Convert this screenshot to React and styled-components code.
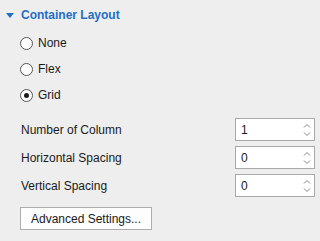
import React, { useState } from 'react';
import styled, { createGlobalStyle } from 'styled-components';

const GlobalStyle = createGlobalStyle`
  body {
    margin: 0;
    background: #eeeeee;
    font-family: "Liberation Sans", Arial, sans-serif;
    font-size: 12px;
    color: #1a1a1a;
  }
`;

const Panel = styled.div`
  width: 320px;
  height: 241px;
  background: #eeeeee;
`;

const Header = styled.div`
  height: 30px;
  display: flex;
  align-items: center;
  padding-left: 6px;
  gap: 7px;
  color: #1f6fc5;
  font-weight: bold;
  font-size: 12px;
  cursor: pointer;
`;

const RadioGroup = styled.div`
  padding-left: 20px;
  display: flex;
  flex-direction: column;
`;

const RadioRow = styled.label`
  height: 26px;
  display: flex;
  align-items: center;
  gap: 5px;
  cursor: pointer;
`;

const RadioCircle = styled.span`
  width: 11px;
  height: 11px;
  border: 1px solid #555555;
  border-radius: 50%;
  background: #ffffff;
  display: flex;
  align-items: center;
  justify-content: center;

  &::after {
    content: '';
    width: 5px;
    height: 5px;
    border-radius: 50%;
    background: #1a1a1a;
    display: ${(p) => (p.checked ? 'block' : 'none')};
  }
`;

const Fields = styled.div`
  margin-top: 10px;
  padding: 0 5px 0 21px;
  display: flex;
  flex-direction: column;
  gap: 5px;
`;

const FieldRow = styled.div`
  height: 23px;
  display: flex;
  align-items: center;
  justify-content: space-between;
`;

const SpinBox = styled.div`
  height: 21px;
  width: 73px;
  border: 1px solid #a9a9a9;
  background: #ffffff;
  display: flex;
  align-items: center;
  padding-left: 5px;
`;

const SpinValue = styled.span`
  flex: 1;
`;

const SpinArrows = styled.div`
  width: 15px;
  height: 21px;
  display: flex;
  align-items: center;
  justify-content: center;
`;

const Button = styled.button`
  margin: 10px 0 0 20px;
  width: 132px;
  height: 23px;
  border: 1px solid #adadad;
  background: #fdfdfd;
  font-family: inherit;
  font-size: 12px;
  color: #1a1a1a;
  padding: 0;
`;

function Caret() {
  return (
    <svg width="8" height="5" viewBox="0 0 8 5">
      <path d="M0 0 H8 L4 5 Z" fill="#1f6fc5" />
    </svg>
  );
}

function Arrows() {
  return (
    <svg width="8" height="14" viewBox="0 0 8 14">
      <path d="M1 4.5 L4 1.5 L7 4.5" fill="none" stroke="#858585" strokeWidth="1" />
      <path d="M1 9.5 L4 12.5 L7 9.5" fill="none" stroke="#858585" strokeWidth="1" />
    </svg>
  );
}

function Field({ label, value }) {
  return (
    <FieldRow>
      <span>{label}</span>
      <SpinBox>
        <SpinValue>{value}</SpinValue>
        <SpinArrows>
          <Arrows />
        </SpinArrows>
      </SpinBox>
    </FieldRow>
  );
}

export default function App() {
  const [layout, setLayout] = useState('Grid');

  return (
    <Panel>
      <GlobalStyle />
      <Header>
        <Caret />
        Container Layout
      </Header>
      <RadioGroup>
        {['None', 'Flex', 'Grid'].map((opt) => (
          <RadioRow key={opt} onClick={() => setLayout(opt)}>
            <RadioCircle checked={layout === opt} />
            {opt}
          </RadioRow>
        ))}
      </RadioGroup>
      <Fields>
        <Field label="Number of Column" value="1" />
        <Field label="Horizontal Spacing" value="0" />
        <Field label="Vertical Spacing" value="0" />
      </Fields>
      <Button>Advanced Settings...</Button>
    </Panel>
  );
}
